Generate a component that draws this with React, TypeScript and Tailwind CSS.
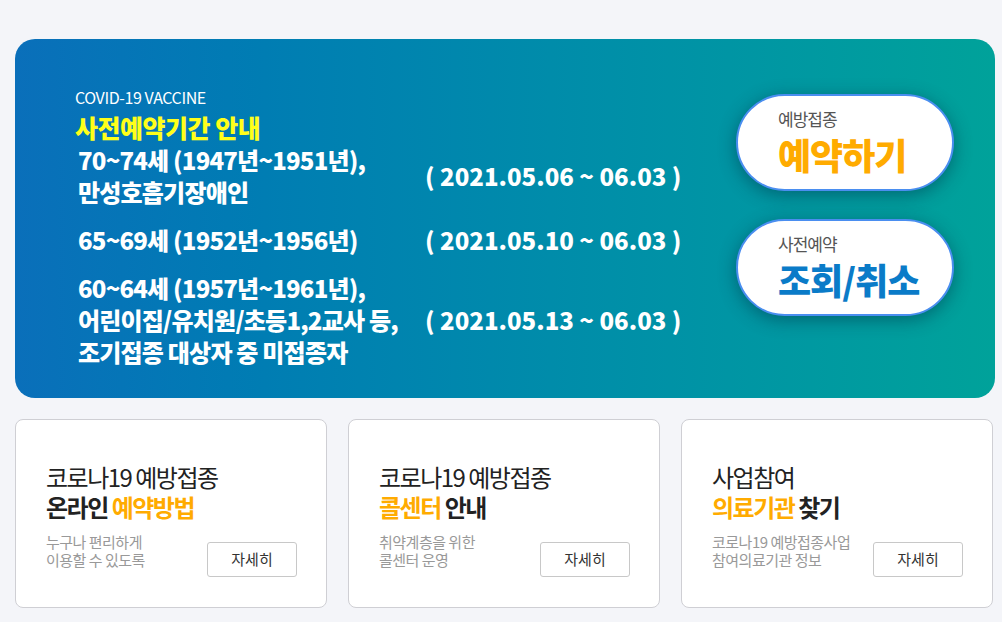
import React from 'react';

const font = { fontFamily: '"Noto Sans CJK KR", "Noto Sans", sans-serif' };

interface Period {
  lines: string[];
  date: string;
}

const periods: Period[] = [
  { lines: ['70~74세 (1947년~1951년),', '만성호흡기장애인'], date: '( 2021.05.06 ~ 06.03 )' },
  { lines: ['65~69세 (1952년~1956년)'], date: '( 2021.05.10 ~ 06.03 )' },
  {
    lines: ['60~64세 (1957년~1961년),', '어린이집/유치원/초등1,2교사 등,', '조기접종 대상자 중 미접종자'],
    date: '( 2021.05.13 ~ 06.03 )',
  },
];

interface Card {
  top: string;
  bottom: React.ReactNode;
  desc: string[];
}

const cards: Card[] = [
  {
    top: '코로나19 예방접종',
    bottom: (
      <>
        온라인 <span className="text-[#ffab00]">예약방법</span>
      </>
    ),
    desc: ['누구나 편리하게', '이용할 수 있도록'],
  },
  {
    top: '코로나19 예방접종',
    bottom: (
      <>
        <span className="text-[#ffab00]">콜센터</span> 안내
      </>
    ),
    desc: ['취약계층을 위한', '콜센터 운영'],
  },
  {
    top: '사업참여',
    bottom: (
      <>
        <span className="text-[#ffab00]">의료기관</span> 찾기
      </>
    ),
    desc: ['코로나19 예방접종사업', '참여의료기관 정보'],
  },
];

const PillButton = ({ label, title, color }: { label: string; title: string; color: string }) => (
  <button className="w-[218px] h-[97px] rounded-full bg-white border-2 border-[#4a8ef0] shadow-[0_4px_18px_rgba(0,40,60,0.45)] flex flex-col items-start pl-[40px] pt-[12px]">
    <span className="text-[17px] leading-[22px] text-[#555] tracking-[-1px]">{label}</span>
    <span className={`mt-[6px] text-[36px] leading-[36px] font-black tracking-[-1px] ${color}`}>{title}</span>
  </button>
);

export default function App() {
  return (
    <div className="w-full min-h-screen bg-[#f4f5f9] pt-[39px] pl-[15px]" style={font}>
      <div className="w-[980px] h-[359px] rounded-[20px] bg-gradient-to-r from-[#0a6fba] to-[#00a29a] flex justify-between pl-[60px] pr-[41px] pt-[47px]">
        <div className="flex flex-col text-white">
          <div className="text-[16px] leading-[22px] tracking-[-0.4px]">COVID-19 VACCINE</div>
          <div className="mt-[4px] text-[25px] leading-[30px] font-black text-[#ffff1a] tracking-[-0.5px]">
            사전예약기간 안내
          </div>
          <div className="flex flex-col gap-[16px] mt-[2px]">
            {periods.map((p, i) => (
              <div key={i} className="flex items-center">
                <div className="w-[350px] pl-[3px] flex flex-col">
                  {p.lines.map((l) => (
                    <div key={l} className="text-[24px] leading-[32px] font-black tracking-[-0.8px] whitespace-nowrap">
                      {l}
                    </div>
                  ))}
                </div>
                <div className="text-[24px] leading-[32px] font-black tracking-[0px] whitespace-nowrap">{p.date}</div>
              </div>
            ))}
          </div>
        </div>
        <div className="flex flex-col gap-[28px] pt-[8px]">
          <PillButton label="예방접종" title="예약하기" color="text-[#ffab00]" />
          <PillButton label="사전예약" title="조회/취소" color="text-[#0a7bc8]" />
        </div>
      </div>

      <div className="w-[978px] grid grid-cols-3 gap-[21px] mt-[21px]">
        {cards.map((c, i) => (
          <div
            key={i}
            className="h-[189px] bg-white border border-[#cfcfd4] rounded-[8px] pl-[30px] pr-[29px] pt-[43px] flex flex-col"
          >
            <div className="text-[24px] leading-[28px] text-[#222] tracking-[-1.5px]">{c.top}</div>
            <div className="mt-[2px] text-[24px] leading-[28px] font-bold text-[#222] tracking-[-1.5px]">{c.bottom}</div>
            <div className="flex justify-between items-start mt-[12px]">
              <div className="text-[15px] leading-[18px] text-[#999] tracking-[-0.5px]">
                {c.desc.map((d) => (
                  <div key={d}>{d}</div>
                ))}
              </div>
              <button className="mt-[9px] w-[90px] h-[35px] border border-[#c8c8c8] rounded-[3px] text-[15px] text-[#333] bg-white">
                자세히
              </button>
            </div>
          </div>
        ))}
      </div>
    </div>
  );
}
